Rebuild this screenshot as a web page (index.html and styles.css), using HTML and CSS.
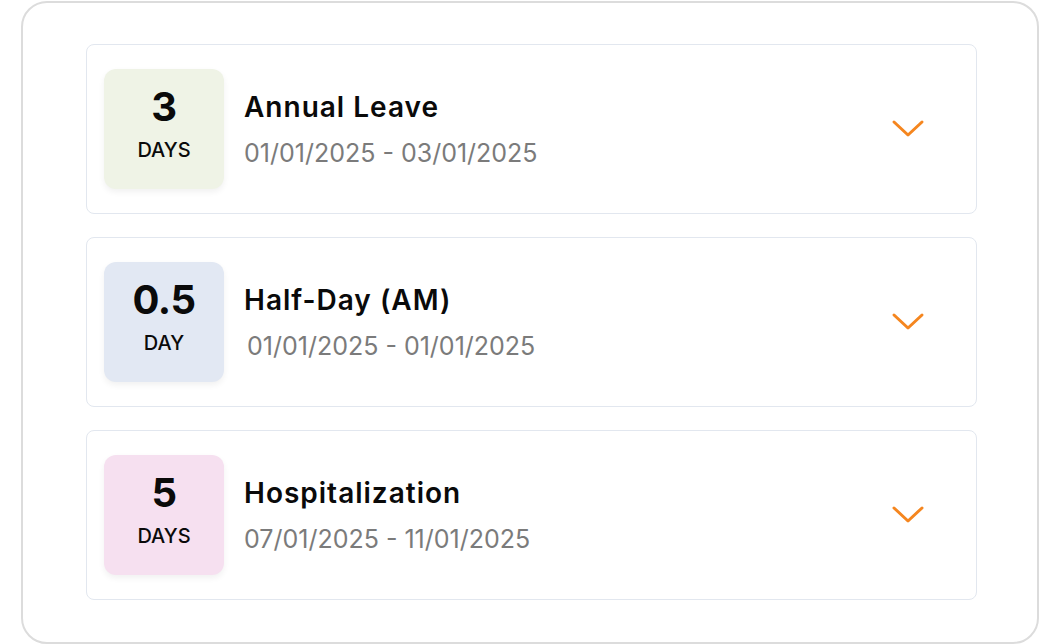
FILE: index.html
```html
<!DOCTYPE html>
<html lang="en">
<head>
  <meta charset="UTF-8" />
  <meta name="viewport" content="width=device-width, initial-scale=1" />
  <title>Leave History</title>
  <link rel="stylesheet" href="styles.css">
</head>
<body>
  <div class="panel">
    <div class="leave-card">
      <div class="badge badge-annual">
        <span class="badge-num">3</span>
        <span class="badge-unit">DAYS</span>
      </div>
      <div class="leave-info">
        <h3>Annual Leave</h3>
        <p class="dates">01/01/2025 - 03/01/2025</p>
      </div>
      <svg class="chevron" width="34" height="20" viewBox="0 0 34 20"><path d="M3 3 L17 16 L31 3" /></svg>
    </div>

    <div class="leave-card">
      <div class="badge badge-half">
        <span class="badge-num">0.5</span>
        <span class="badge-unit">DAY</span>
      </div>
      <div class="leave-info">
        <h3>Half-Day (AM)</h3>
        <p class="dates dates-indent">01/01/2025 - 01/01/2025</p>
      </div>
      <svg class="chevron" width="34" height="20" viewBox="0 0 34 20"><path d="M3 3 L17 16 L31 3" /></svg>
    </div>

    <div class="leave-card">
      <div class="badge badge-hospital">
        <span class="badge-num">5</span>
        <span class="badge-unit">DAYS</span>
      </div>
      <div class="leave-info">
        <h3>Hospitalization</h3>
        <p class="dates">07/01/2025 - 11/01/2025</p>
      </div>
      <svg class="chevron" width="34" height="20" viewBox="0 0 34 20"><path d="M3 3 L17 16 L31 3" /></svg>
    </div>
  </div>
</body>
</html>
```

FILE: styles.css
```css
* {
  box-sizing: border-box;
}
body {
  margin: 0;
  background: #ffffff;
  font-family: 'Inter', 'Liberation Sans', sans-serif;
  color: #0a0a0a;
}
.panel {
  width: 1018px;
  height: 643px;
  margin: 1px 0 0 21px;
  border: 2px solid #dcdcdc;
  border-radius: 26px;
  padding: 41px 60px 41px 63px;
  display: flex;
  flex-direction: column;
  gap: 23px;
}
.leave-card {
  height: 170px;
  border: 1px solid #e2e7ef;
  border-radius: 8px;
  padding: 0 51px 0 17px;
  display: flex;
  align-items: center;
}
.badge {
  width: 120px;
  height: 120px;
  border-radius: 12px;
  display: flex;
  flex-direction: column;
  align-items: center;
  justify-content: center;
  padding-bottom: 12px;
  box-shadow: 0 3px 6px rgba(0, 0, 0, 0.06);
  flex-shrink: 0;
}
.badge-annual {
  background: #eff3e6;
}
.badge-half {
  background: #e2e8f3;
}
.badge-hospital {
  background: #f6e0f0;
}
.badge-num {
  font-size: 40px;
  font-weight: 700;
  line-height: 44px;
  letter-spacing: -0.5px;
}
.badge-unit {
  font-size: 20px;
  font-weight: 500;
  line-height: 24px;
  margin-top: 9px;
}
.leave-info {
  flex: 1;
  margin-left: 20px;
}
.leave-info h3 {
  margin: 0;
  font-size: 28px;
  font-weight: 600;
  line-height: 34px;
  letter-spacing: 1px;
}
.dates {
  margin: 14px 0 0;
  font-size: 25px;
  line-height: 30px;
  color: #7b7b7b;
}
.dates-indent {
  padding-left: 3px;
}
.chevron {
  flex-shrink: 0;
}
.chevron path {
  fill: none;
  stroke: #f5861f;
  stroke-width: 3;
  stroke-linecap: round;
  stroke-linejoin: round;
}
```
